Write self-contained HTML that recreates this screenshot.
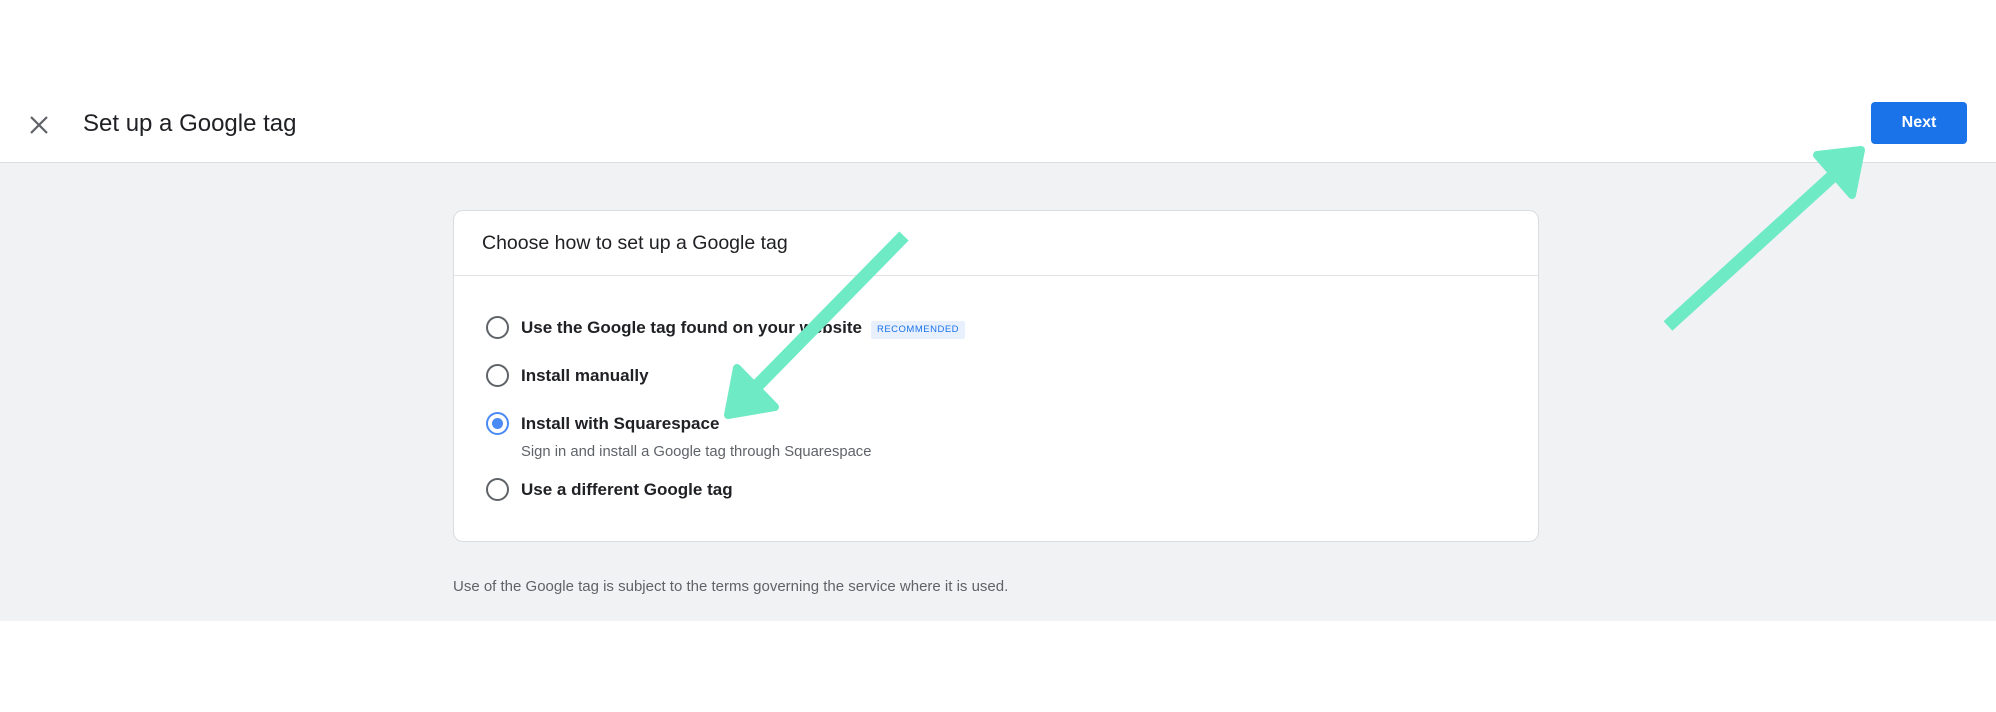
<!DOCTYPE html>
<html><head><style>
*{margin:0;padding:0;box-sizing:border-box}
body{width:1996px;height:712px;background:#fff;font-family:"Liberation Sans",Arial,sans-serif;position:relative;overflow:hidden}
.gray{position:absolute;left:0;top:162px;width:1996px;height:459px;background:#f1f2f4;border-top:1px solid #dadce0}
.title{position:absolute;left:83px;top:110px;font-size:24px;color:#202124}
.next{position:absolute;left:1871px;top:102px;width:96px;height:42px;background:#1a73e8;border-radius:4px;color:#fff;font-size:16px;font-weight:bold;text-align:center;line-height:42px}
.card{position:absolute;left:453px;top:210px;width:1086px;height:332px;background:#fff;border:1px solid #dadce0;border-radius:10px}
.card .hd{height:65px;border-bottom:1px solid #e3e3e3;padding-left:28px;font-size:19.5px;line-height:64px;color:#202124}
.r{position:absolute;left:32px;width:23px;height:23px;border:2px solid #5f6368;border-radius:50%}
.r.on{border-color:#4a8af4}
.r.on:after{content:"";position:absolute;left:4px;top:4px;width:11px;height:11px;border-radius:50%;background:#4a8af4}
.l{position:absolute;left:67px;font-size:17px;font-weight:bold;color:#202124;line-height:20px}
.sub{position:absolute;left:67px;top:233px;font-size:14.8px;color:#5f6368}
.badge{position:absolute;left:417px;top:110px;width:94px;height:18px;background:#e8f0fe;color:#1a73e8;font-size:9.5px;text-align:center;line-height:18px;letter-spacing:.5px;border-radius:2px}
.foot{position:absolute;left:453px;top:578px;font-size:15px;color:#5f6368}
</style></head><body>
<div class="gray"></div>
<svg style="position:absolute;left:29px;top:115px" width="20" height="20"><path d="M2 2L18 18M18 2L2 18" stroke="#5f6368" stroke-width="2.2"/></svg>
<div class="title">Set up a Google tag</div>
<div class="next">Next</div>
<div class="card">
<div class="hd">Choose how to set up a Google tag</div>
<div class="r" style="top:105px"></div><div class="l" style="top:107px">Use the Google tag found on your website</div>
<div class="badge">RECOMMENDED</div>
<div class="r" style="top:153px"></div><div class="l" style="top:155px">Install manually</div>
<div class="r on" style="top:201px"></div><div class="l" style="top:203px">Install with Squarespace</div>
<div class="sub">Sign in and install a Google tag through Squarespace</div>
<div class="r" style="top:267px"></div><div class="l" style="top:269px">Use a different Google tag</div>
</div>
<div class="foot">Use of the Google tag is subject to the terms governing the service where it is used.</div>
<svg style="position:absolute;left:0;top:0" width="1996" height="712">
<g fill="#6eeac4" stroke="#6eeac4" stroke-linejoin="round">
<line x1="904" y1="236" x2="755" y2="388" stroke-width="13"/>
<path d="M737 368 L728 415 L775 407 Z" stroke-width="8"/>
<line x1="1668" y1="326" x2="1835" y2="174" stroke-width="13"/>
<path d="M1817 155 L1861 150 L1852 195 Z" stroke-width="8"/>
</g></svg>
</body></html>
